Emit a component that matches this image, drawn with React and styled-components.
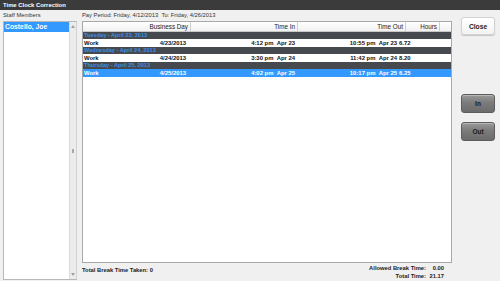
import React from "react";
import styled, { createGlobalStyle } from "styled-components";

const GlobalStyle = createGlobalStyle`
  html, body {
    margin: 0;
    padding: 0;
  }
  body {
    background: #f0f0f0;
    font-family: "Liberation Sans", Arial, sans-serif;
  }
`;

const Window = styled.div`
  width: 500px;
  height: 281px;
  display: flex;
  flex-direction: column;
  overflow: hidden;
  background: #f0f0f0;
`;

const TitleBar = styled.div`
  height: 10px;
  line-height: 10px;
  padding-left: 3px;
  background: #3b3b3b;
  color: #fff;
  font-size: 5.9px;
  font-weight: bold;
`;

const Body = styled.div`
  flex: 1;
  display: flex;
  min-height: 0;
`;

const StaffPane = styled.div`
  width: 74px;
  padding-left: 3px;
  display: flex;
  flex-direction: column;
`;

const PaneLabel = styled.div`
  height: 11px;
  line-height: 11px;
  font-size: 5.8px;
  color: #333;
  white-space: nowrap;
`;

const ListBox = styled.div`
  flex: 1;
  display: flex;
  margin-bottom: 1px;
  border: 1px solid #b8b8b8;
  border-right: none;
  background: #fff;
`;

const List = styled.div`
  flex: 1;
`;

const ListItem = styled.div`
  height: 10px;
  line-height: 10px;
  padding-left: 1px;
  font-size: 6.8px;
  font-weight: bold;
  background: ${(p) => (p.selected ? "#3399ff" : "transparent")};
  color: ${(p) => (p.selected ? "#fff" : "#222")};
`;

const ScrollBar = styled.div`
  width: 6px;
  display: flex;
  flex-direction: column;
  justify-content: space-between;
  align-items: center;
  padding: 3px 0;
  background: #ececec;
  border-left: 1px solid #dadada;
  border-right: 1px solid #d2d2d2;
`;

const Grip = styled.div`
  width: 2px;
  height: 4px;
  background: #a8a8a8;
`;

const Splitter = styled.div`
  width: 5px;
`;

const MainPane = styled.div`
  width: 370px;
  display: flex;
  flex-direction: column;
`;

const Table = styled.div`
  flex: 1;
  background: #fff;
  border: 1px solid #a9a9a9;
  display: flex;
  flex-direction: column;
`;

const HeaderRow = styled.div`
  display: grid;
  grid-template-columns: 108px 107px 108px 34px 1fr;
  height: 9px;
  background: linear-gradient(#ffffff, #f1f1f1);
  border-bottom: 1px solid #c9c9c9;
`;

const HeaderCell = styled.div`
  line-height: 9px;
  padding-right: 2px;
  text-align: right;
  font-size: 6.3px;
  color: #222;
  white-space: nowrap;
  border-right: ${(p) => (p.last ? "none" : "1px solid #cfcfcf")};
`;

const GroupRow = styled.div`
  height: 7px;
  line-height: 7px;
  padding-left: 1px;
  background: #464a4e;
  color: #3b8fe6;
  font-size: 5.6px;
  font-weight: bold;
  white-space: nowrap;
`;

const DataRow = styled.div`
  display: grid;
  grid-template-columns: 108px 107px 101px 1fr;
  height: 8px;
  line-height: 8px;
  font-size: 5.9px;
  font-weight: bold;
  white-space: nowrap;
  background: ${(p) => (p.selected ? "#3399ff" : "#fff")};
  color: ${(p) => (p.selected ? "#fff" : "#111")};
`;

const DayCell = styled.div`
  display: flex;
  justify-content: space-between;
  padding: 0 5px 0 1px;
`;

const TimeCell = styled.div`
  text-align: right;
  padding-right: ${(p) => p.pad}px;
`;

const HoursCell = styled.div`
  padding-left: 0;
`;

const Footer = styled.div`
  height: 18px;
  display: flex;
  justify-content: space-between;
  align-items: flex-start;
  padding: 2px 8px 0 0;
  box-sizing: border-box;
  font-size: 5.8px;
  font-weight: bold;
  color: #222;
  white-space: nowrap;
`;

const BreakTaken = styled.div`
  line-height: 11px;
`;

const Totals = styled.div`
  display: grid;
  grid-template-columns: auto 18px;
  line-height: 7.5px;
  text-align: right;
`;

const ActionPane = styled.div`
  flex: 1;
  display: flex;
  flex-direction: column;
  padding: 7px 5px 0 9px;
`;

const CloseButton = styled.button`
  height: 18px;
  padding: 0;
  border: 1px solid #d2d2d2;
  border-radius: 3px;
  background: linear-gradient(#ffffff, #f3f3f3);
  box-shadow: 0 1px 1px rgba(0, 0, 0, 0.18);
  font-family: inherit;
  font-size: 6.7px;
  font-weight: bold;
  color: #222;
`;

const ClockButton = styled.button`
  height: 19px;
  margin-top: ${(p) => p.gap}px;
  padding: 0;
  border: 1px solid #5c5c5c;
  border-radius: 3px;
  background: linear-gradient(#9a9a9a, #7b7b7b 45%, #6c6c6c);
  box-shadow: inset 0 1px 0 rgba(255, 255, 255, 0.3);
  font-family: inherit;
  font-size: 6.5px;
  font-weight: bold;
  color: #1a1a1a;
`;

const Arrow = ({ down }) => (
  <svg width="4" height="3" viewBox="0 0 4 3">
    <path d={down ? "M0 0 L4 0 L2 3 Z" : "M0 3 L4 3 L2 0 Z"} fill="#a0a0a0" />
  </svg>
);

const days = [
  { label: "Tuesday - April 23, 2013", date: "4/23/2013", timeIn: "4:12 pm\u00a0\u00a0Apr 23", timeOut: "10:55 pm\u00a0\u00a0Apr 23", hours: "6.72" },
  { label: "Wednesday - April 24, 2013", date: "4/24/2013", timeIn: "3:30 pm\u00a0\u00a0Apr 24", timeOut: "11:42 pm\u00a0\u00a0Apr 24", hours: "8.20" },
  { label: "Thursday - April 25, 2013", date: "4/25/2013", timeIn: "4:02 pm\u00a0\u00a0Apr 25", timeOut: "10:17 pm\u00a0\u00a0Apr 25", hours: "6.25", selected: true },
];

export default function App() {
  return (
    <>
      <GlobalStyle />
      <Window>
        <TitleBar>Time Clock Correction</TitleBar>
        <Body>
          <StaffPane>
            <PaneLabel>Staff Members</PaneLabel>
            <ListBox>
              <List>
                <ListItem selected>Costello, Joe</ListItem>
              </List>
              <ScrollBar>
                <Arrow />
                <Grip />
                <Arrow down />
              </ScrollBar>
            </ListBox>
          </StaffPane>
          <Splitter />
          <MainPane>
            <PaneLabel>Pay Period: Friday, 4/12/2013&nbsp;&nbsp;To: Friday, 4/26/2013</PaneLabel>
            <Table>
              <HeaderRow>
                <HeaderCell>Business Day</HeaderCell>
                <HeaderCell>Time In</HeaderCell>
                <HeaderCell>Time Out</HeaderCell>
                <HeaderCell>Hours</HeaderCell>
                <HeaderCell last />
              </HeaderRow>
              {days.map((d) => (
                <React.Fragment key={d.date}>
                  <GroupRow>{d.label}</GroupRow>
                  <DataRow selected={d.selected}>
                    <DayCell>
                      <span>Work</span>
                      <span>{d.date}</span>
                    </DayCell>
                    <TimeCell pad={3}>{d.timeIn}</TimeCell>
                    <TimeCell pad={2}>{d.timeOut}</TimeCell>
                    <HoursCell>{d.hours}</HoursCell>
                  </DataRow>
                </React.Fragment>
              ))}
            </Table>
            <Footer>
              <BreakTaken>Total Break Time Taken: 0</BreakTaken>
              <Totals>
                <span>Allowed Break Time:</span>
                <span>0.00</span>
                <span>Total Time:</span>
                <span>21.17</span>
              </Totals>
            </Footer>
          </MainPane>
          <ActionPane>
            <CloseButton>Close</CloseButton>
            <ClockButton gap={59}>In</ClockButton>
            <ClockButton gap={9}>Out</ClockButton>
          </ActionPane>
        </Body>
      </Window>
    </>
  );
}
